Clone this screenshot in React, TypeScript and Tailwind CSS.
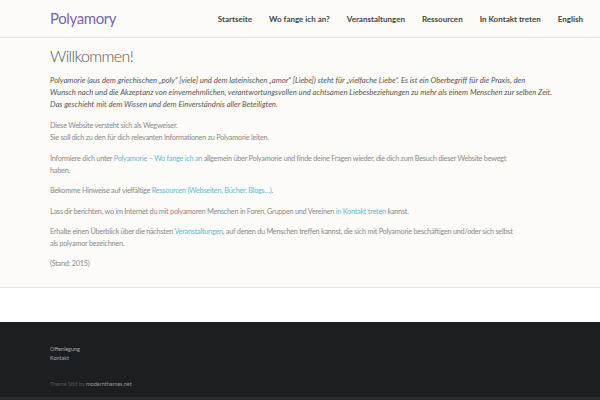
import React from "react";

export default function App() {
  return (
    <div className="w-[600px] h-[400px] overflow-hidden bg-white font-['Lato',sans-serif]">
      <header className="h-[38px] bg-[#fcfbf7] border-b border-[#e6e4df] flex items-center justify-between pl-[50px] pr-[17px]">
        <div className="text-[15px] tracking-[-0.4px] text-[#7d5fb3] leading-none">Polyamory</div>
        <nav className="flex gap-[17px] text-[8px] font-bold text-[#444]">
          <span>Startseite</span>
          <span>Wo fange ich an?</span>
          <span>Veranstaltungen</span>
          <span>Ressourcen</span>
          <span>In Kontakt treten</span>
          <span>English</span>
        </nav>
      </header>
      <main className="bg-[#fcfbf7] h-[250px] border-b border-[#e8e6e1]">
        <div className="w-[500px] mx-auto pt-[8px]">
          <h1 className="text-[16px] font-light tracking-[-0.6px] text-[#555] leading-[20px]">Willkommen!</h1>
          <p className="mt-[8px] italic text-[7.7px] leading-[12px] text-[#555] whitespace-nowrap">
            Polyamorie (aus dem griechischen „poly“ [viele] und dem lateinischen „amor“ [Liebe]) steht für „vielfache Liebe“. Es ist ein Oberbegriff für die Praxis, den
            <br />
            Wunsch nach und die Akzeptanz von einvernehmlichen, verantwortungsvollen und achtsamen Liebesbeziehungen zu mehr als einem Menschen zur selben Zeit.
            <br />
            Das geschieht mit dem Wissen und dem Einverständnis aller Beteiligten.
          </p>
          <div className="text-[7.3px] tracking-[-0.25px] leading-[11.5px] text-[#8a8a8a] whitespace-nowrap">
            <p className="mt-[10px]">
              Diese Website versteht sich als Wegweiser.
              <br />
              Sie soll dich zu den für dich relevanten Informationen zu Polyamorie leiten.
            </p>
            <p className="mt-[10px]">
              Informiere dich unter <span className="text-[#5fb8d8]">Polyamorie – Wo fange ich an</span> allgemein über Polyamorie und finde deine Fragen wieder, die dich zum Besuch dieser Website bewegt
              <br />
              haben.
            </p>
            <p className="mt-[9px]">
              Bekomme Hinweise auf vielfältige <span className="text-[#5fb8d8]">Ressourcen (Webseiten, Bücher, Blogs…)</span>.
            </p>
            <p className="mt-[9px]">
              Lass dir berichten, wo im Internet du mit polyamoren Menschen in Foren, Gruppen und Vereinen <span className="text-[#5fb8d8]">in Kontakt treten</span> kannst.
            </p>
            <p className="mt-[9px]">
              Erhalte einen Überblick über die nächsten <span className="text-[#5fb8d8]">Veranstaltungen</span>, auf denen du Menschen treffen kannst, die sich mit Polyamorie beschäftigen und/oder sich selbst
              <br />
              als polyamor bezeichnen.
            </p>
            <p className="mt-[9px]">(Stand: 2015)</p>
          </div>
        </div>
      </main>
      <div className="h-[34px] bg-white"></div>
      <footer className="bg-[#1c1f22] h-[78px] pl-[50px] pt-[23px] border-b-[3px] border-[#2a2d30]">
        <div className="text-[5.5px] leading-[9px] text-[#aaa]">
          <div>Offenlegung</div>
          <div>Kontakt</div>
        </div>
        <div className="mt-[17px] text-[5.5px] text-[#555]">
          Theme Stilt by <span className="text-[#999]">modernthemes.net</span>
        </div>
      </footer>
    </div>
  );
}
